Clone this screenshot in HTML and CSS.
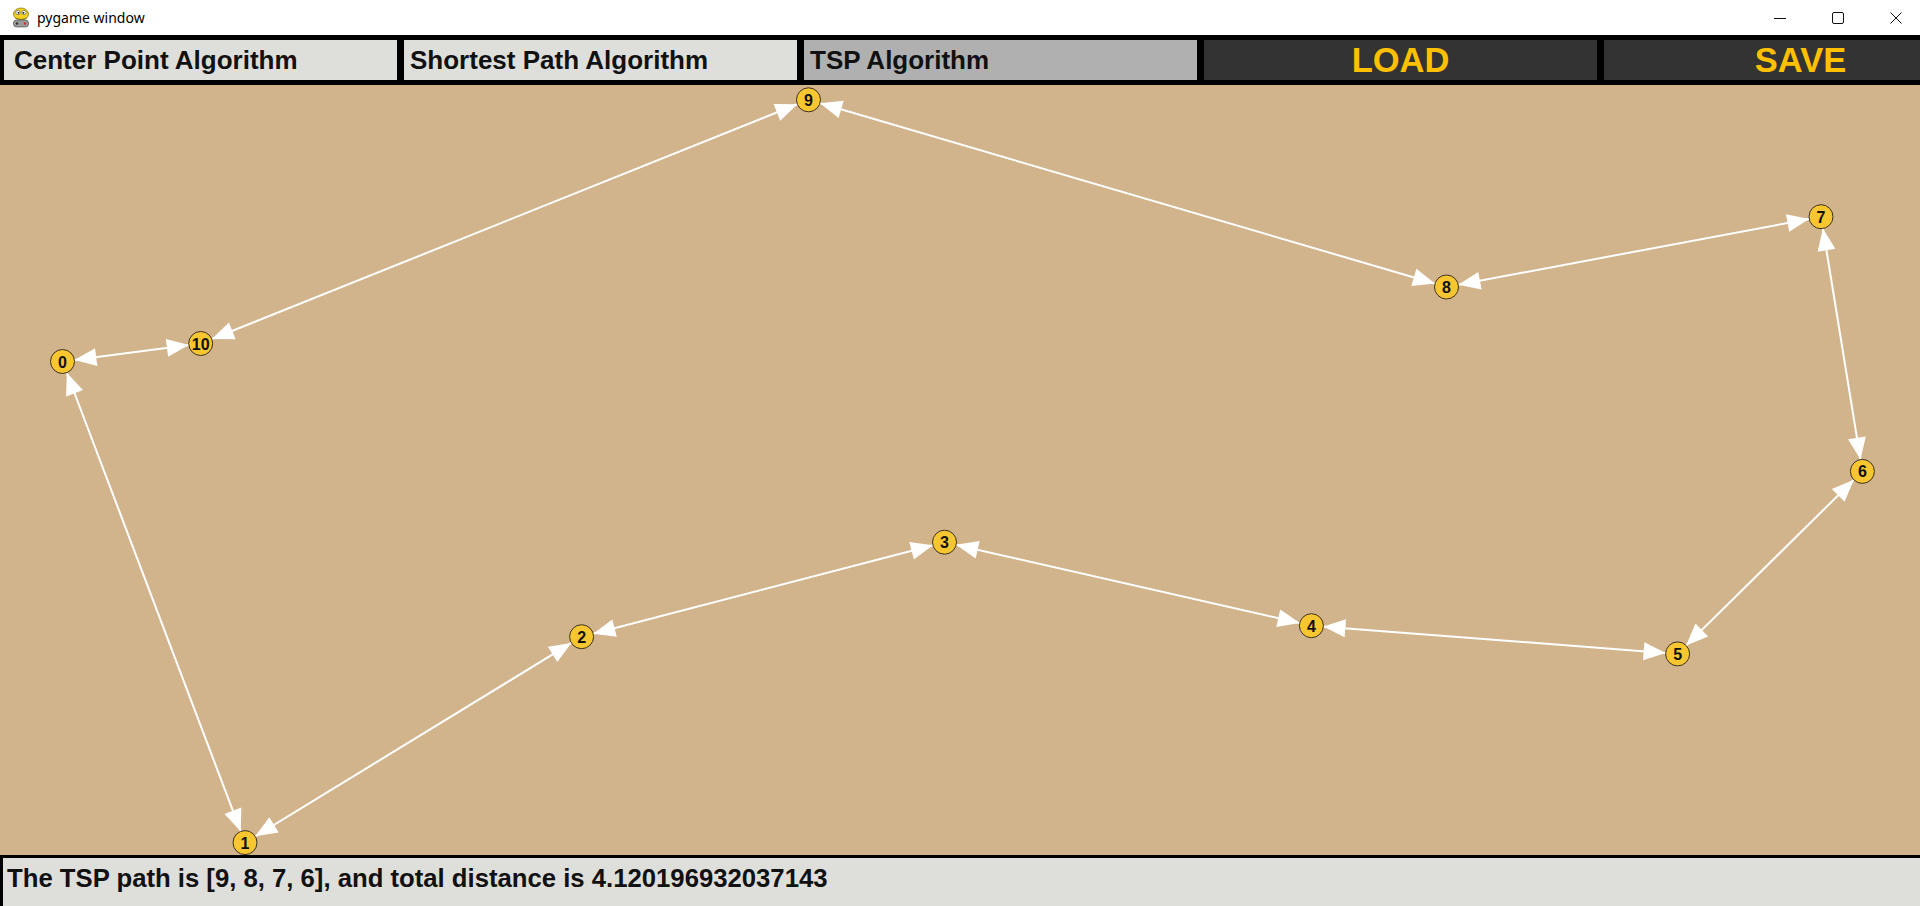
FILE: index.html
```html
<!DOCTYPE html>
<html>
<head>
<meta charset="utf-8">
<title>pygame window</title>
<link rel="stylesheet" href="styles.css">
</head>
<body>
<div class="titlebar">
  <svg class="app-icon" width="20" height="22" viewBox="0 0 20 22">
    <ellipse cx="10" cy="7" rx="7.5" ry="6" fill="#f3d11e" stroke="#8a7a10" stroke-width="0.8"/>
    <circle cx="7" cy="5.5" r="2.2" fill="#fff" stroke="#333" stroke-width="0.5"/>
    <circle cx="13" cy="5.5" r="2.2" fill="#fff" stroke="#333" stroke-width="0.5"/>
    <circle cx="7.5" cy="5.8" r="0.9" fill="#111"/>
    <circle cx="12.5" cy="5.8" r="0.9" fill="#111"/>
    <path d="M4 11 Q10 14 16 11" stroke="#8a7a10" stroke-width="0.8" fill="none"/>
    <rect x="2.5" y="13" width="15" height="7" rx="3" fill="#9a9a9a" stroke="#555" stroke-width="0.7"/>
    <circle cx="6" cy="16.5" r="1.2" fill="#333"/>
    <circle cx="14" cy="16.5" r="1.2" fill="#c33"/>
  </svg>
  <span class="title">pygame window</span>
  <div class="controls">
    <div class="win-btn"><svg width="14" height="14" viewBox="0 0 14 14"><path d="M1 7.5 H13" stroke="#111" stroke-width="1" fill="none"/></svg></div>
    <div class="win-btn"><svg width="14" height="14" viewBox="0 0 14 14"><rect x="1.5" y="1.5" width="11" height="11" rx="1.5" stroke="#111" stroke-width="1" fill="none"/></svg></div>
    <div class="win-btn"><svg width="14" height="14" viewBox="0 0 14 14"><path d="M1.5 1.5 L12.5 12.5 M12.5 1.5 L1.5 12.5" stroke="#111" stroke-width="1" fill="none"/></svg></div>
  </div>
</div>
<div class="toolbar">
  <div class="btn first">Center Point Algorithm</div>
  <div class="btn">Shortest Path Algorithm</div>
  <div class="btn active">TSP Algorithm</div>
  <div class="btn dark">LOAD</div>
  <div class="btn dark">SAVE</div>
</div>
<div class="canvas">
  <svg class="graph" width="1920" height="770" viewBox="0 85 1920 770">
    <defs>
      <marker id="ah" markerUnits="userSpaceOnUse" viewBox="-40 -12 40 24" markerWidth="40" markerHeight="24" refX="0" refY="0" orient="auto-start-reverse">
        <path d="M-12 0 L-34 -9 L-34 9 Z" fill="#fff" stroke="none"/>
      </marker>
    </defs>
    <g class="edges">
      <line x1="62.5" y1="361.5" x2="200.7" y2="343.5"/>
      <line x1="200.7" y1="343.5" x2="808.5" y2="99.8"/>
      <line x1="808.5" y1="99.8" x2="1446.5" y2="287"/>
      <line x1="1446.5" y1="287" x2="1821" y2="216.7"/>
      <line x1="1821" y1="216.7" x2="1862.4" y2="471.4"/>
      <line x1="1862.4" y1="471.4" x2="1677.6" y2="653.9"/>
      <line x1="1677.6" y1="653.9" x2="1311.4" y2="625.7"/>
      <line x1="1311.4" y1="625.7" x2="944.5" y2="542.2"/>
      <line x1="944.5" y1="542.2" x2="581.6" y2="636.7"/>
      <line x1="581.6" y1="636.7" x2="245" y2="842.6"/>
      <line x1="245" y1="842.6" x2="62.5" y2="361.5"/>
    </g>
    <g class="nodes">
      <circle cx="62.5" cy="361.5" r="12"/><text x="62.5" y="367.5">0</text>
      <circle cx="245" cy="842.6" r="12"/><text x="245" y="848.6">1</text>
      <circle cx="581.6" cy="636.7" r="12"/><text x="581.6" y="642.7">2</text>
      <circle cx="944.5" cy="542.2" r="12"/><text x="944.5" y="548.2">3</text>
      <circle cx="1311.4" cy="625.7" r="12"/><text x="1311.4" y="631.7">4</text>
      <circle cx="1677.6" cy="653.9" r="12"/><text x="1677.6" y="659.9">5</text>
      <circle cx="1862.4" cy="471.4" r="12"/><text x="1862.4" y="477.4">6</text>
      <circle cx="1821" cy="216.7" r="12"/><text x="1821" y="222.7">7</text>
      <circle cx="1446.5" cy="287" r="12"/><text x="1446.5" y="293">8</text>
      <circle cx="808.5" cy="99.8" r="12"/><text x="808.5" y="105.8">9</text>
      <circle cx="200.7" cy="343.5" r="12"/><text x="200.7" y="349.5">10</text>
    </g>
  </svg>
</div>
<div class="status">The TSP path is [9, 8, 7, 6], and total distance is 4.120196932037143</div>
</body>
</html>
```
FILE: styles.css
```css
html, body {
  margin: 0;
  padding: 0;
}
body {
  width: 1920px;
  height: 906px;
  overflow: hidden;
  background: #d2b48c;
  display: flex;
  flex-direction: column;
  font-family: "Liberation Sans", Arial, sans-serif;
}
.titlebar {
  height: 35px;
  flex: 0 0 35px;
  background: #ffffff;
  display: flex;
  align-items: center;
}
.app-icon {
  margin-left: 11px;
  display: block;
}
.title {
  margin-left: 6px;
  font-family: "Noto Sans", sans-serif;
  font-size: 14px;
  color: #000;
  padding-bottom: 1px;
}
.controls {
  margin-left: auto;
  margin-right: -5px;
  display: flex;
  height: 100%;
}
.win-btn {
  width: 58px;
  display: flex;
  align-items: center;
  justify-content: center;
}
.win-btn svg {
  display: block;
}
.toolbar {
  flex: 0 0 50px;
  height: 50px;
  display: flex;
  overflow: hidden;
  background: #000;
}
.btn {
  flex: 0 0 400px;
  box-sizing: border-box;
  border-style: solid;
  border-color: #000;
  border-width: 5px 3px 5px 4px;
  background: #dededa;
  display: flex;
  align-items: center;
  padding-left: 6px;
  font-weight: bold;
  font-size: 26px;
  color: #111;
  white-space: nowrap;
}
.btn.first {
  padding-left: 10px;
}
.btn.active {
  background: #b0b0b0;
}
.btn.dark {
  background: #333333;
  color: #ffc000;
  justify-content: center;
  padding-left: 0;
  font-size: 34.5px;
}
.canvas {
  flex: 1 1 auto;
  position: relative;
  overflow: visible;
}
.graph {
  display: block;
  overflow: visible;
}
.edges line {
  stroke: #ffffff;
  stroke-width: 2;
  marker-start: url(#ah);
  marker-end: url(#ah);
}
.nodes circle {
  fill: #f8c630;
  stroke: #3a3122;
  stroke-width: 1;
}
.nodes text {
  font-family: "Liberation Sans", Arial, sans-serif;
  font-weight: bold;
  font-size: 16px;
  fill: #111;
  text-anchor: middle;
}
.status {
  flex: 0 0 51px;
  height: 51px;
  box-sizing: border-box;
  border-top: 3px solid #000;
  border-left: 3px solid #000;
  background: #dededa;
  padding: 7px 0 0 4px;
  font-weight: bold;
  font-size: 25.7px;
  line-height: 26px;
  color: #111;
  white-space: nowrap;
}
```
